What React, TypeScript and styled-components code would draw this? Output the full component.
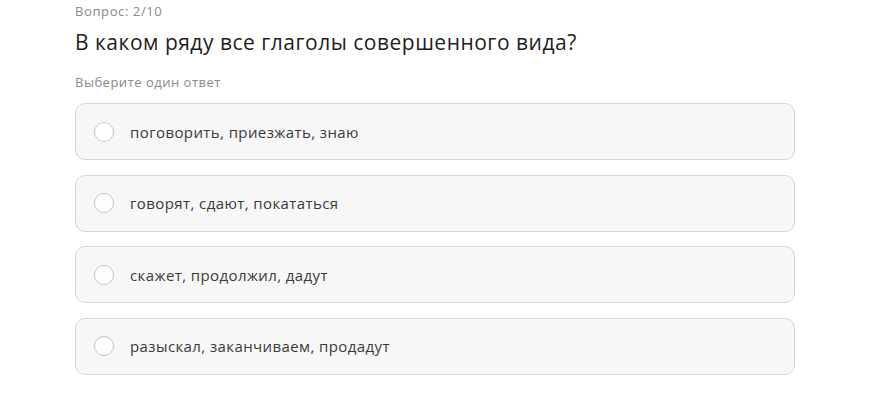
import React, { useState } from 'react'
import styled, { createGlobalStyle } from 'styled-components'

const options = [
    'поговорить, приезжать, знаю',
    'говорят, сдают, покататься',
    'скажет, продолжил, дадут',
    'разыскал, заканчиваем, продадут',
]

export default function App() {
    const [selected, setSelected] = useState<number | null>(null)

    return (
        <>
            <GlobalStyle />
            <Page>
                <Counter>Вопрос: 2/10</Counter>
                <Title>В каком ряду все глаголы совершенного вида?</Title>
                <Hint>Выберите один ответ</Hint>
                <OptionList>
                    {options.map((text, i) => (
                        <Option key={i} onClick={() => setSelected(i)}>
                            <Radio $checked={selected === i} />
                            <OptionText>{text}</OptionText>
                        </Option>
                    ))}
                </OptionList>
            </Page>
        </>
    )
}

const GlobalStyle = createGlobalStyle`
    body {
        margin: 0;
        background: #ffffff;
        font-family: 'Open Sans', 'Noto Sans', sans-serif;
    }
`

const Page = styled.div`
    width: 720px;
    margin-left: 75px;
    display: flex;
    flex-direction: column;
`

const Counter = styled.div`
    font-size: 13px;
    line-height: 18px;
    letter-spacing: 0.6px;
    color: #8a8a8a;
    margin-top: 2px;
`

const Title = styled.h1`
    margin: 8px 0 0;
    font-size: 21px;
    line-height: 28px;
    letter-spacing: 0.5px;
    font-weight: 500;
    color: #1e1e1e;
`

const Hint = styled.div`
    margin-top: 17px;
    font-size: 13px;
    line-height: 18px;
    letter-spacing: 0.5px;
    color: #8a8a8a;
`

const OptionList = styled.div`
    margin-top: 12px;
    display: flex;
    flex-direction: column;
    gap: 14.5px;
`

const Option = styled.div`
    height: 57px;
    box-sizing: border-box;
    border: 1px solid #d6d6d6;
    border-radius: 10px;
    background: #f7f7f7;
    display: flex;
    align-items: center;
    padding-left: 18px;
    cursor: pointer;
`

const Radio = styled.span<{ $checked: boolean }>`
    width: 20px;
    height: 20px;
    box-sizing: border-box;
    border-radius: 50%;
    border: 1px solid #c4c4c4;
    background: ${p => (p.$checked ? '#333' : '#fff')};
    flex-shrink: 0;
`

const OptionText = styled.span`
    margin-left: 16px;
    font-size: 15px;
    letter-spacing: 0.4px;
    color: #3a3a3a;
`
